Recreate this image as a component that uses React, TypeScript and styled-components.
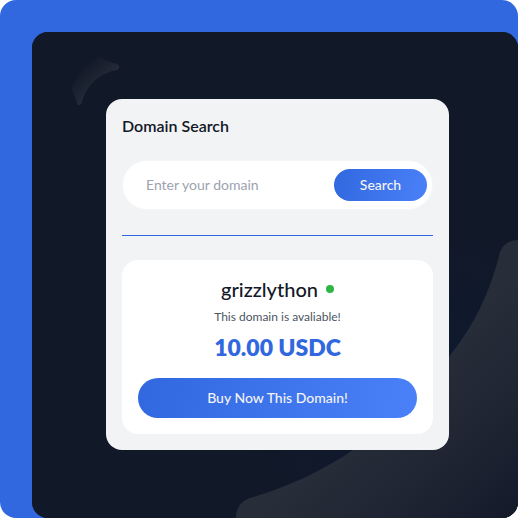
import React, { useState } from "react";
import styled, { createGlobalStyle } from "styled-components";

const GlobalStyle = createGlobalStyle`
  * { box-sizing: border-box; }
  body {
    margin: 0;
    background: #ffffff;
    font-family: Lato, "Open Sans", sans-serif;
    color: #111827;
  }
  h1, h2, p { margin: 0; }
  button, input { font-family: inherit; }
`;

const Frame = styled.div`
  display: flex;
  min-height: 100vh;
  padding: 32px 0 0 32px;
  border-radius: 16px;
  background: #3167df;
`;

const Stage = styled.main`
  position: relative;
  flex: 1;
  min-width: 0;
  overflow: hidden;
  padding: 67px 69px 68px 74px;
  border-radius: 16px;
  background: #111827;
`;

const Backdrop = styled.svg`
  position: absolute;
  inset: 0;
  width: 100%;
  height: 100%;
`;

const Card = styled.section`
  position: relative;
  padding: 16px;
  border-radius: 16px;
  background: #f2f3f5;
`;

const Title = styled.h1`
  margin-bottom: 24px;
  font-size: 16px;
  line-height: 21px;
  font-weight: 600;
`;

const SearchForm = styled.form`
  display: flex;
  align-items: center;
  height: 50px;
  padding: 0 5px 0 23px;
  border: 1px solid #f5f6f8;
  border-radius: 25px;
  background: #ffffff;
`;

const DomainInput = styled.input`
  flex: 1;
  min-width: 0;
  height: 32px;
  padding: 0 0 2px;
  border: 0;
  outline: 0;
  background: transparent;
  color: #111827;
  font-size: 14px;
  &::placeholder { color: #9ca3af; opacity: 1; }
`;

const PillButton = styled.button<{ $wide?: boolean }>`
  flex: none;
  width: ${(p) => (p.$wide ? "100%" : "93px")};
  height: ${(p) => (p.$wide ? "40px" : "32px")};
  padding: 0;
  border: 0;
  border-radius: 20px;
  background: linear-gradient(100deg, #3167df, #4a80f8);
  color: #f3f4f6;
  font-size: 14px;
  line-height: 20px;
  font-weight: 500;
  cursor: pointer;
`;

const Divider = styled.hr`
  height: 1px;
  margin: 25px 0 24px;
  border: 0;
  background: #3167df;
`;

const Result = styled.div`
  display: flex;
  flex-direction: column;
  align-items: center;
  padding: 16px;
  border-radius: 16px;
  background: #ffffff;
`;

const DomainName = styled.h2`
  display: flex;
  align-items: center;
  gap: 8px;
  margin-bottom: 7px;
  font-size: 20px;
  line-height: 26px;
  font-weight: 500;
`;

const StatusDot = styled.span`
  width: 8px;
  height: 8px;
  border-radius: 50%;
  background: #2eb543;
`;

const Availability = styled.p`
  margin-bottom: 7px;
  color: #4b5563;
  font-size: 12px;
  line-height: 16px;
`;

const Price = styled.p`
  margin-bottom: 16px;
  color: #3167df;
  font-size: 23px;
  line-height: 30px;
  font-weight: 800;
`;

export default function App() {
  const [query, setQuery] = useState("");

  return (
    <>
      <GlobalStyle />
      <Frame>
        <Stage>
          <Backdrop viewBox="32 32 486 486" preserveAspectRatio="xMidYMid slice" aria-hidden="true">
            <defs>
              <radialGradient id="glow" gradientUnits="userSpaceOnUse" cx="430" cy="400" r="200">
                <stop offset="0" stopColor="#0f1a30" />
                <stop offset="1" stopColor="#111827" />
              </radialGradient>
              <linearGradient id="swoosh" gradientUnits="userSpaceOnUse" x1="390" y1="390" x2="510" y2="520">
                <stop offset="0" stopColor="#282d3a" />
                <stop offset="0.5" stopColor="#1f2532" />
                <stop offset="1" stopColor="#141a2a" />
              </linearGradient>
              <linearGradient id="spark" gradientUnits="userSpaceOnUse" x1="102" y1="88" x2="82" y2="67">
                <stop offset="0" stopColor="#262c39" />
                <stop offset="1" stopColor="#262c39" stopOpacity="0" />
              </linearGradient>
            </defs>
            <rect x="32" y="32" width="486" height="486" fill="url(#glow)" />
            <path
              d="M518 240C508 240 501 246 499 256C487 302 470 330 449 357C422 395 385 430 353 450C322 471 288 487 250 498C241 501 236 508 236 518H518Z"
              fill="url(#swoosh)"
            />
            <path
              d="M99 56C104 60 109 62 117 64C120 65 120 69 117 70C99 73 86 86 82 102C81 106 78 106 77 103C75 96 74 92 71 89C76 76 85 65 99 56Z"
              fill="url(#spark)"
            />
          </Backdrop>
          <Card>
            <Title>Domain Search</Title>
            <SearchForm onSubmit={(e) => e.preventDefault()}>
              <DomainInput
                aria-label="Domain"
                placeholder="Enter your domain"
                value={query}
                onChange={(e) => setQuery(e.target.value)}
              />
              <PillButton type="submit">Search</PillButton>
            </SearchForm>
            <Divider />
            <Result>
              <DomainName>
                grizzlython
                <StatusDot />
              </DomainName>
              <Availability>This domain is avaliable!</Availability>
              <Price>10.00 USDC</Price>
              <PillButton type="button" $wide>
                Buy Now This Domain!
              </PillButton>
            </Result>
          </Card>
        </Stage>
      </Frame>
    </>
  );
}
